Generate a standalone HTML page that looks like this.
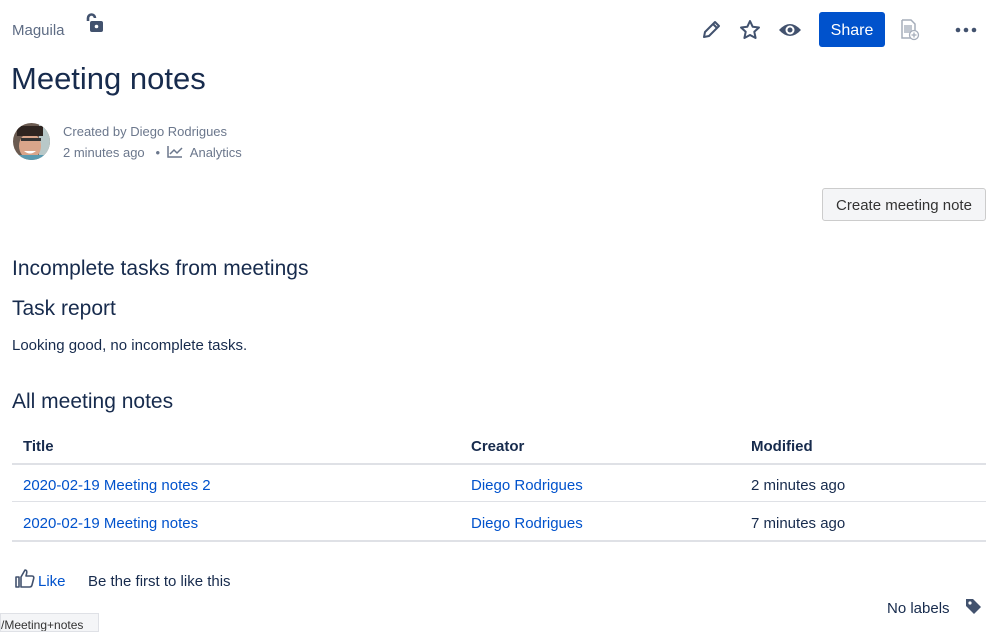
<!DOCTYPE html>
<html><head><meta charset="utf-8"><style>
body{margin:0;width:999px;height:630px;overflow:hidden;background:#fff;font-family:"Liberation Sans",sans-serif;color:#172b4d;position:relative}
.a{position:absolute;white-space:nowrap}
a{color:#0052cc;text-decoration:none}
.l{position:absolute;left:12px;width:974px;background:#dfe1e6;height:1px}
</style></head><body>
<div class="a" style="left:12px;top:22px;font-size:15px;color:#5e6c84">Maguila</div>
<svg class="a" style="left:84px;top:13px" width="20" height="20" viewBox="0 0 20 20"><path d="M4 8V5a3.5 3.5 0 0 1 7 0" fill="none" stroke="#42526e" stroke-width="2.6"/><rect x="6" y="8" width="13" height="11" rx="2" fill="#42526e"/><circle cx="12.5" cy="13.5" r="1.8" fill="#fff"/></svg>
<div class="a" style="left:11px;top:61px;font-size:31px">Meeting notes</div>
<svg class="a" style="left:13px;top:123px" width="37" height="37"><defs><clipPath id="c"><circle cx="18.5" cy="18.5" r="18.5"/></clipPath></defs><g clip-path="url(#c)"><rect width="37" height="37" fill="#6a5a50"/><rect x="26" y="0" width="11" height="37" fill="#b8c8c8"/><ellipse cx="17" cy="23" rx="11" ry="13" fill="#d9a58a"/><rect x="4" y="3" width="26" height="10" fill="#2e2420"/><rect x="8" y="15" width="20" height="3" fill="#333"/><path d="M11 28q6 5 12 0" fill="#fff"/><rect x="0" y="32" width="37" height="6" fill="#5a9ab0"/></g></svg>
<div class="a" style="left:63px;top:124px;font-size:13px;color:#6b778c">Created by Diego Rodrigues</div>
<div class="a" style="left:63px;top:145px;font-size:13px;color:#6b778c">2 minutes ago &nbsp; • &nbsp;<svg width="16" height="12" viewBox="0 0 16 12" style="vertical-align:-1px"><path d="M1 0v11h14M3 8l4-4 3 3 5-5" fill="none" stroke="#6b778c" stroke-width="1.5"/></svg>&nbsp; Analytics</div>
<svg class="a" style="left:700px;top:19px" width="22" height="22" viewBox="0 0 22 22"><path d="M4 18l1-5L15 3l4 4L9 17z M13 5l4 4" fill="none" stroke="#42526e" stroke-width="2" stroke-linejoin="round"/></svg>
<svg class="a" style="left:739px;top:19px" width="22" height="22" viewBox="0 0 22 22"><path d="M11 2l2.7 5.8 6.3.7-4.7 4.3 1.3 6.2L11 16l-5.6 3 1.3-6.2L2 8.5l6.3-.7z" fill="none" stroke="#42526e" stroke-width="2" stroke-linejoin="round"/></svg>
<svg class="a" style="left:778px;top:19px" width="24" height="22" viewBox="0 0 24 22"><path d="M1 11Q12 -1 23 11Q12 23 1 11z" fill="#42526e"/><circle cx="12" cy="11" r="4.5" fill="#fff"/><circle cx="12" cy="11" r="2.5" fill="#42526e"/></svg>
<div class="a" style="left:819px;top:12px;width:66px;height:35px;background:#0052cc;border-radius:3px;color:#fff;font-size:16px;text-align:center;line-height:37px">Share</div>
<svg class="a" style="left:900px;top:19px" width="20" height="22" viewBox="0 0 20 22"><path d="M2 1h9l4 4v9" fill="none" stroke="#a5adba" stroke-width="1.5"/><path d="M2 1v18h9" fill="none" stroke="#a5adba" stroke-width="1.5"/><rect x="4" y="6" width="8" height="8" fill="#c1c7d0"/><circle cx="14" cy="16" r="4.5" fill="#fff" stroke="#a5adba" stroke-width="1.3"/><path d="M14 13.5v5M11.5 16h5" stroke="#a5adba" stroke-width="1.3"/></svg>
<svg class="a" style="left:955px;top:26px" width="22" height="8"><circle cx="3" cy="4" r="2.3" fill="#42526e"/><circle cx="11" cy="4" r="2.3" fill="#42526e"/><circle cx="19" cy="4" r="2.3" fill="#42526e"/></svg>
<div class="a" style="left:822px;top:188px;width:162px;height:31px;background:#f4f5f7;border:1px solid #ccc;border-radius:3px;font-size:15px;line-height:34px;text-align:center;color:#333">Create meeting note</div>
<div class="a" style="left:12px;top:257px;font-size:21px">Incomplete tasks from meetings</div>
<div class="a" style="left:12px;top:297px;font-size:21px">Task report</div>
<div class="a" style="left:12px;top:337px;font-size:15px">Looking good, no incomplete tasks.</div>
<div class="a" style="left:12px;top:390px;font-size:21px">All meeting notes</div>
<div class="a" style="left:23px;top:438px;font-size:15px;font-weight:bold">Title</div>
<div class="a" style="left:471px;top:438px;font-size:15px;font-weight:bold">Creator</div>
<div class="a" style="left:751px;top:438px;font-size:15px;font-weight:bold">Modified</div>
<div class="l" style="top:463px;height:2px"></div>
<div class="a" style="left:23px;top:477px;font-size:15px"><a>2020-02-19 Meeting notes 2</a></div>
<div class="a" style="left:471px;top:477px;font-size:15px"><a>Diego Rodrigues</a></div>
<div class="a" style="left:751px;top:477px;font-size:15px">2 minutes ago</div>
<div class="l" style="top:501px"></div>
<div class="a" style="left:23px;top:515px;font-size:15px"><a>2020-02-19 Meeting notes</a></div>
<div class="a" style="left:471px;top:515px;font-size:15px"><a>Diego Rodrigues</a></div>
<div class="a" style="left:751px;top:515px;font-size:15px">7 minutes ago</div>
<div class="l" style="top:540px;height:2px"></div>
<svg class="a" style="left:15px;top:569px" width="20" height="19" viewBox="0 0 20 19"><path d="M1 8h3v10H1zM6 8l4-7c2 0 2 2 1.5 4L11 7h6c1.5 0 2 1 1.7 2.5L17 16c-.4 1.5-1 2-2.5 2H6z" fill="none" stroke="#42526e" stroke-width="1.6" stroke-linejoin="round"/></svg>
<div class="a" style="left:38px;top:573px;font-size:15px"><a>Like</a></div>
<div class="a" style="left:88px;top:573px;font-size:15px">Be the first to like this</div>
<div class="a" style="left:887px;top:600px;font-size:15px">No labels</div>
<svg class="a" style="left:964px;top:597px" width="19" height="19" viewBox="0 0 19 19"><path d="M2 2h7l8 8-7 7-8-8z" fill="#42526e"/><circle cx="6" cy="6" r="1.6" fill="#fff"/></svg>
<div class="a" style="left:0;top:613px;width:97px;height:17px;background:#f4f5f7;border:1px solid #dfe1e6;font-size:12px;line-height:22px;color:#333;overflow:hidden">/Meeting+notes</div>
</body></html>
